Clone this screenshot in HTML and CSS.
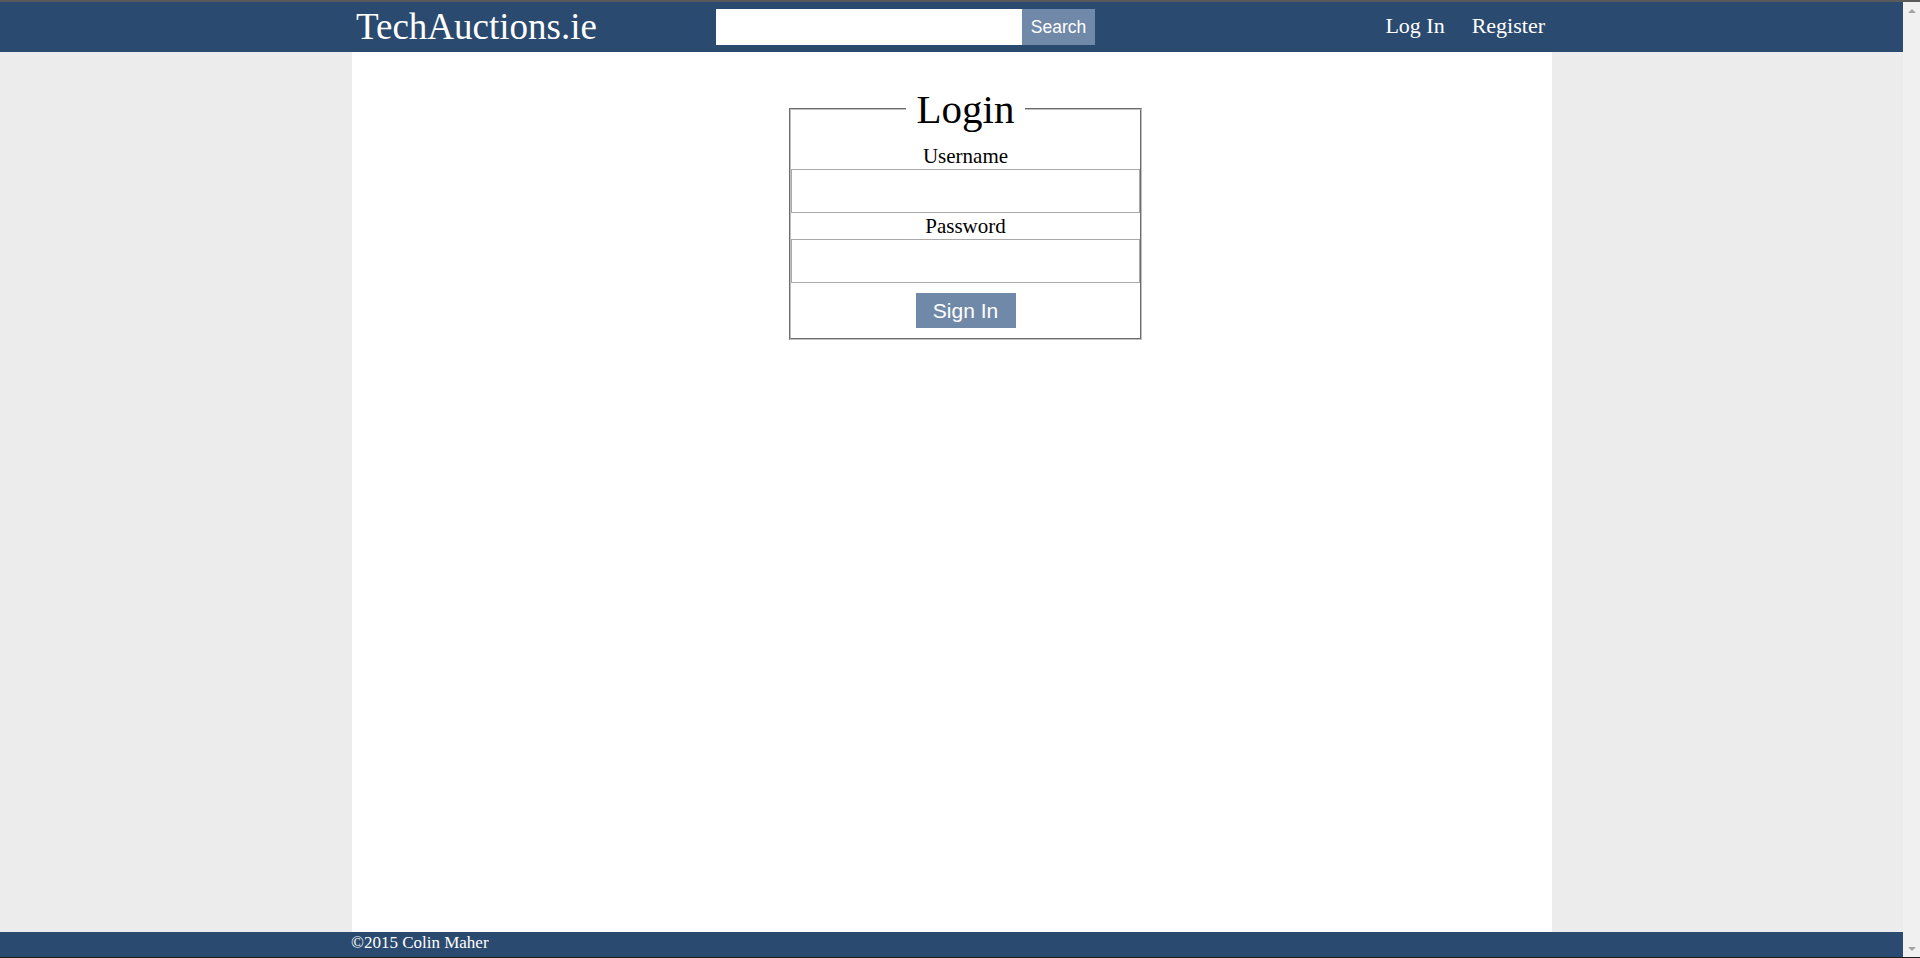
FILE: index.html
```html
<!DOCTYPE html>
<html lang="en">
<head>
<meta charset="utf-8">
<title>TechAuctions.ie - Login</title>
<link rel="stylesheet" href="styles.css">
</head>
<body>
<div class="window">
  <div class="page">
    <header class="topbar">
      <div class="topbar-inner">
        <a class="logo" href="#">TechAuctions.ie</a>
        <form class="search">
          <input class="search-input" type="text">
          <button class="search-btn" type="button">Search</button>
        </form>
        <nav class="nav">
          <a href="#">Log In</a>
          <a href="#">Register</a>
        </nav>
      </div>
    </header>
    <div class="main">
      <div class="content">
        <fieldset class="login">
          <legend>Login</legend>
          <label class="field-label">Username</label>
          <input class="field" type="text">
          <label class="field-label second">Password</label>
          <input class="field" type="password">
          <div class="actions">
            <button class="signin" type="button">Sign In</button>
          </div>
        </fieldset>
      </div>
    </div>
    <footer class="footer">
      <div class="footer-inner">&copy;2015 Colin Maher</div>
    </footer>
  </div>
  <div class="scrollbar">
    <span class="arrow up"></span>
    <span class="arrow down"></span>
  </div>
</div>
</body>
</html>
```
FILE: styles.css
```css
html, body {
  margin: 0;
  padding: 0;
  height: 100%;
}
body {
  font-family: "Liberation Serif", "Times New Roman", serif;
  background: #ececec;
  box-sizing: border-box;
  border-top: 2px solid #5a5a5a;
  border-bottom: 1px solid #1e1e1e;
  overflow: hidden;
}
.window {
  display: flex;
  height: 100%;
}
.page {
  flex: 1;
  display: flex;
  flex-direction: column;
  min-width: 0;
}
.topbar {
  background: #2b4a6f;
  height: 50px;
  flex: none;
}
.topbar-inner {
  margin-left: 352px;
  width: 1193px;
  display: flex;
  align-items: flex-start;
}
.logo {
  width: 364px;
  box-sizing: border-box;
  padding-left: 4px;
  font-size: 37px;
  line-height: 50px;
  color: #fff;
  text-decoration: none;
}
.search {
  display: flex;
  margin: 7px 0 0;
}
.search-input {
  width: 306px;
  height: 36px;
  box-sizing: border-box;
  border: 0;
  margin: 0;
  padding: 0 6px;
  background: #fff;
}
.search-btn {
  width: 73px;
  height: 36px;
  border: 0;
  margin: 0;
  padding: 0;
  background: #7189a8;
  color: #fff;
  font-family: "Liberation Sans", Arial, sans-serif;
  font-size: 17.5px;
}
.nav {
  margin-left: auto;
  display: flex;
  gap: 27px;
}
.nav a {
  color: #fff;
  text-decoration: none;
  font-size: 22px;
  line-height: 47px;
}
.main {
  flex: 1;
  display: flex;
}
.content {
  margin-left: 352px;
  width: 1200px;
  background: #fff;
  padding-top: 35px;
  box-sizing: border-box;
}
.login {
  margin: 0 0 0 437px;
  width: 353px;
  box-sizing: border-box;
  border: 2px groove #c0c0c0;
  padding: 13px 0 10px;
  text-align: center;
  min-inline-size: 0;
}
.login legend {
  font-size: 41px;
  line-height: 44px;
  padding: 0 11px;
  margin: 0 auto;
  color: #000;
}
.field-label {
  display: block;
  font-size: 21px;
  line-height: 25px;
  color: #000;
}
.field-label.second {
  line-height: 26px;
}
.field {
  display: block;
  width: 100%;
  height: 44px;
  box-sizing: border-box;
  margin: 0;
  border: 1px solid #a9a9a9;
  padding: 0 4px;
}
.actions {
  padding-top: 10px;
}
.signin {
  width: 100px;
  height: 35px;
  border: 0;
  padding: 0;
  margin: 0;
  background: #7189a8;
  color: #fff;
  font-family: "Liberation Sans", Arial, sans-serif;
  font-size: 21px;
  vertical-align: top;
}
.footer {
  background: #2b4a6f;
  height: 25px;
  flex: none;
}
.footer-inner {
  margin-left: 351px;
  color: #fff;
  font-size: 17px;
  line-height: 22px;
}
.scrollbar {
  width: 17px;
  flex: none;
  background: #f0f0f0;
  display: flex;
  flex-direction: column;
  justify-content: space-between;
  align-items: center;
  padding: 7px 0 6px;
  box-sizing: border-box;
}
.arrow {
  width: 0;
  height: 0;
  border-left: 4px solid transparent;
  border-right: 4px solid transparent;
}
.arrow.up {
  border-bottom: 4px solid #a3a3a3;
}
.arrow.down {
  border-top: 4px solid #a3a3a3;
}
```
